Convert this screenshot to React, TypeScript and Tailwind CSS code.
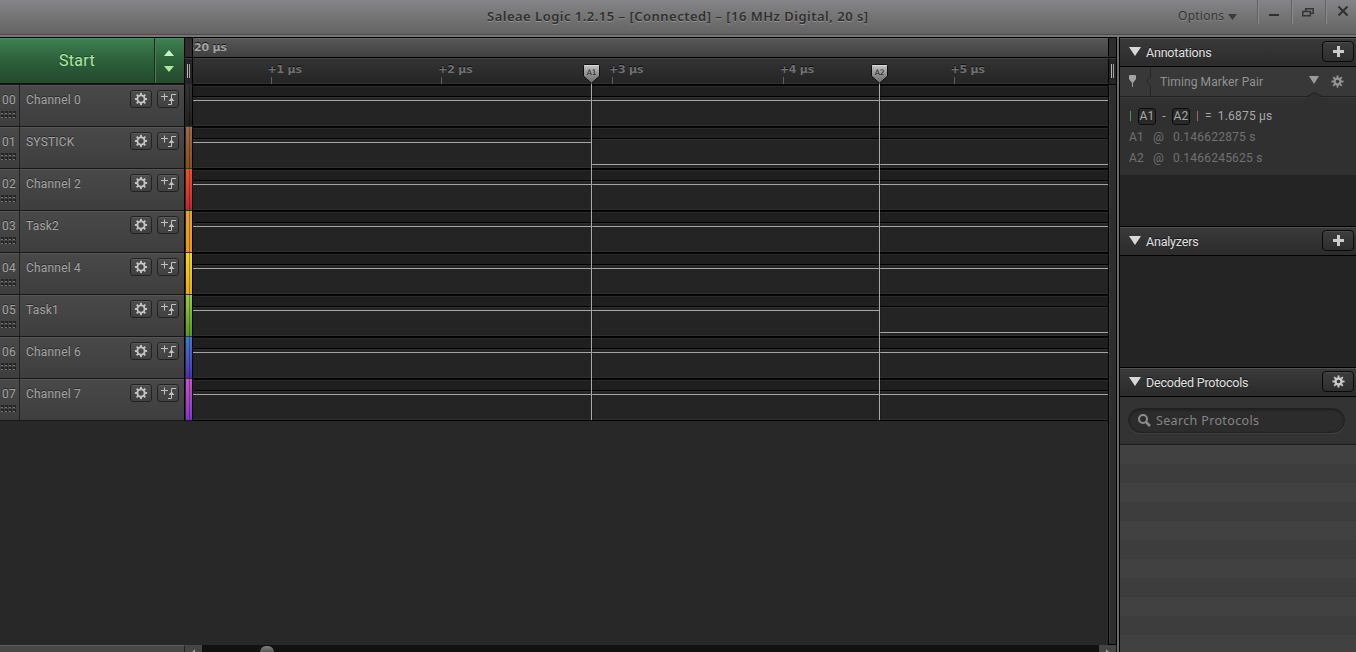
import React from "react";

const gearTeeth = [0, 45, 90, 135, 180, 225, 270, 315];

function Gear({ size, ring, color }: { size: number; ring: number; color: string }) {
  return (
    <svg width={size} height={size} viewBox="0 0 14 14" className="shrink-0">
      <circle cx="7" cy="7" r="3.6" fill="none" stroke={color} strokeWidth={ring} />
      {gearTeeth.map((a) => (
        <rect key={a} x="6.05" y="0.9" width="1.9" height="2.2" fill={color} transform={`rotate(${a} 7 7)`} />
      ))}
    </svg>
  );
}

function SolidGear({ color }: { color: string }) {
  return (
    <svg width="13" height="13" viewBox="0 0 13 13" className="block shrink-0">
      <circle cx="6.5" cy="6.5" r="3" fill="none" stroke={color} strokeWidth="2.4" />
      {gearTeeth.map((a) => (
        <rect key={a} x="5.6" y="0.4" width="1.8" height="2.6" fill={color} transform={`rotate(${a} 6.5 6.5)`} />
      ))}
    </svg>
  );
}

const channels = [
  { id: "00", name: "Channel 0", strip: "from-[#343434] to-[#202020]" },
  { id: "01", name: "SYSTICK", strip: "from-[#9b6b48] to-[#85501c]", fall: 398 },
  { id: "02", name: "Channel 2", strip: "from-[#ee5422] to-[#c71f38]" },
  { id: "03", name: "Task2", strip: "from-[#e6a238] to-[#ee9511]" },
  { id: "04", name: "Channel 4", strip: "from-[#ecd62c] to-[#e7ad08]" },
  { id: "05", name: "Task1", strip: "from-[#96cc46] to-[#58981f]", fall: 686 },
  { id: "06", name: "Channel 6", strip: "from-[#3c7bc8] to-[#4a2fb8]" },
  { id: "07", name: "Channel 7", strip: "from-[#c851bd] to-[#8632d0]" },
];

function Handle() {
  return (
    <svg width="17" height="8" viewBox="0 0 17 8" className="block">
      {[0, 4, 8, 12].map((x) =>
        [0, 4].map((y) => (
          <g key={`${x}-${y}`}>
            <rect x={x + 1} y={y} width="3" height="3" fill="#242424" />
            <rect x={x + 1} y={y + 2} width="2" height="1" fill="#777" />
          </g>
        )),
      )}
    </svg>
  );
}

const smallBtn =
  "flex h-[18px] w-[22px] items-center justify-center rounded-[3px] border border-[#222] bg-linear-to-b from-[#4d4d4d] to-[#404040] shadow-[inset_0_1px_0_#5b5b5b]";

function ChannelRow({ c }: { c: (typeof channels)[number] }) {
  return (
    <div className="flex h-[42px] border-t border-[#181818] bg-linear-to-b from-[#494949] to-[#3e3e3e] shadow-[inset_0_1px_0_#555]">
      <div className="w-5 shrink-0 border-r border-[#222] pl-0.5 pt-[7px]">
        <div className="h-[16px] text-[12px] leading-[16px] tracking-[0.2px] text-[#a5a5a5] [text-shadow:0_-1px_0_#292929]">{c.id}</div>
        <div className="-ml-0.5 mt-[3px]"><Handle /></div>
      </div>
      <div className="flex flex-1 pl-1.5 pt-[5px]">
        <div className="w-[104px] pt-[2px] text-[12px] leading-[16px] tracking-[0.2px] text-[#a5a5a5] [text-shadow:0_-1px_0_#292929]">{c.name}</div>
        <div className={smallBtn}><Gear size={14} ring={1.9} color="#c5c5c5" /></div>
        <div className={`ml-[5px] ${smallBtn}`}>
          <svg width="18" height="14" viewBox="0 0 18 14" fill="none" stroke="#c1c1c1">
            <path d="M2 4.5H9M5.5 1.5V8.5M9 12.5H12.5V2.5H17" />
            <path d="M9.5 9L12.5 5.5L15.5 9Z" fill="#c1c1c1" stroke="none" />
          </svg>
        </div>
      </div>
    </div>
  );
}

function Wave({ fall }: { fall?: number }) {
  return (
    <div className="h-[42px] border-t border-black">
      <div className="flex h-[11px] flex-col border-t border-[#080808] bg-[#1f1f1f] shadow-[inset_0_1px_0_#282828]" />
      <div className="h-[30px] border-b border-t border-b-[#303030] border-t-black bg-[#242424] shadow-[inset_0_1px_0_#2f2f2f]">
        <svg width="915" height="28" className="block" fill="none" stroke="#a6a6a6">
          <path d={fall ? `M0 3.5H${fall + 0.5}V25.5H915` : "M0 3.5H915"} />
        </svg>
      </div>
    </div>
  );
}

function Grip({ className }: { className: string }) {
  return (
    <div className={`flex flex-col ${className}`}>
      <div className="h-5 border-b border-black bg-[#2d2d2d]" />
      <div className="flex h-[26px] items-center justify-center gap-px bg-[#252525] shadow-[inset_0_1px_0_#3c3c3c]">
        <div className="h-3.5 w-px bg-[#b5b5b5]" />
        <div className="h-3.5 w-px bg-[#a0a0a0]" />
      </div>
    </div>
  );
}

function Marker({ label }: { label: string }) {
  return (
    <svg width="18" height="358" viewBox="0 0 18 358" className="block">
      <path d="M9.5 20V358" stroke="#000" strokeOpacity="0.2" />
      <path d="M8.5 20V358" stroke="#a9a9a9" />
      <defs>
        <linearGradient id={`tag${label}`} x1="0" x2="0" y1="0" y2="1">
          <stop offset="0" stopColor="#c6c6c6" />
          <stop offset="0.55" stopColor="#8d8d8d" />
          <stop offset="1" stopColor="#686868" />
        </linearGradient>
      </defs>
      <path d="M1.5 2.5Q.5 2.5 .5 3.5V14L8.5 21.3L16.5 14V3.5Q16.5 2.5 15.5 2.5Z" fill={`url(#tag${label})`} stroke="#101010" />
      <path d="M2 3.5H15" stroke="#dadada" />
      <text x="8.6" y="13" textAnchor="middle" fontSize="7.5" fontFamily="DejaVu Sans" fill="#1a1a1a">{label}</text>
    </svg>
  );
}

const tickText = "text-[11px] font-bold leading-[14px] tracking-[-0.2px] [font-family:'DejaVu_Sans',sans-serif] [text-shadow:0_-1px_0_#111]";
const ticks = ["+1 µs", "+2 µs", "+3 µs", "+4 µs", "+5 µs"];

function PanelHeader({ title, gear }: { title: string; gear?: boolean }) {
  return (
    <div className="flex h-[30px] shrink-0 items-center border-y border-black bg-linear-to-b from-[#3a3a3a] to-[#2b2b2b] pl-[9px] shadow-[inset_0_1px_0_#505050]">
      <svg width="12" height="9" viewBox="0 0 12 9" className="mb-0.5"><path d="M0 0H12L6 9Z" fill="#d8d8d8" /></svg>
      <span className="ml-[5px] flex-1 whitespace-nowrap pt-px text-[12.5px] leading-4 tracking-[-0.2px] text-[#e2e2e2] [text-shadow:0_-1px_0_#111]">{title}</span>
      <div className="mb-px mr-0.5 flex h-[21px] w-8 items-center justify-center rounded-[4px] border border-[#090909] bg-linear-to-b from-[#3d3d3d] to-[#2e2e2e] shadow-[inset_0_1px_0_#4b4b4b]">
        {gear ? <SolidGear color="#cacaca" /> : (
          <svg width="11" height="11" viewBox="0 0 11 11"><path d="M5.5 0V11M0 5.5H11" stroke="#ccc" strokeWidth="3" /></svg>
        )}
      </div>
    </div>
  );
}

function TimePair({ name, at }: { name: string; at: string }) {
  return (
    <div className="flex h-[21px] items-center pl-[9px] text-[12px] tracking-[0.22px] text-[#707070]">
      <span className="w-6">{name}</span>
      <span className="w-5">@</span>
      <span>{at}</span>
    </div>
  );
}

const bands = Array.from({ length: 11 }, (_, i) => i);

export default function App() {
  return (
    <div className="flex h-[652px] w-[1356px] flex-col overflow-hidden bg-[#282828] [font-family:Roboto,sans-serif]">
      <header className="relative flex h-[37px] shrink-0 justify-end border-b border-[#777] bg-linear-to-b from-[#858587] to-[#616161] shadow-[inset_0_-1px_0_#777,inset_0_-2px_0_#4c4c4c]">
        <h1 className="absolute left-[487px] top-[7px] whitespace-nowrap text-[13px] font-semibold leading-[18px] tracking-[0.49px] text-[#303030] [font-family:'Noto_Sans',sans-serif] [text-shadow:0_1px_0_#929292]">
          Saleae Logic 1.2.15 – [Connected] – [16 MHz Digital, 20 s]
        </h1>
        <div className="flex h-[31px] w-[80px] items-center pl-px text-[12px] tracking-[0.3px] text-[#303030] [font-family:'Open_Sans',sans-serif] [text-shadow:0_1px_0_#888]">
          Options
          <svg width="9" height="6" viewBox="0 0 9 6" className="ml-1 mt-0.5"><path d="M0 0H9L4.5 6Z" fill="#3b3b3b" /></svg>
        </div>
        <div className="flex h-6 w-[34px] border-l border-[#626262] pl-[11px] pt-3.5 shadow-[inset_1px_0_0_#8a8a8a]"><div className="h-0.5 w-2.5 bg-[#303030]" /></div>
        <div className="flex h-6 w-[34px] border-l border-[#626262] pl-[10px] pt-2 shadow-[inset_1px_0_0_#8a8a8a]">
          <svg width="12" height="9" viewBox="0 0 12 9" fill="none" stroke="#353535" strokeWidth="1.5"><path d="M3.7 3V.8H11.2V5.2H9M.8 3.5H8.3V7.8H.8Z" /></svg>
        </div>
        <div className="flex h-6 w-[31px] border-l border-[#626262] pl-[12px] pt-1.5 shadow-[inset_1px_0_0_#8a8a8a]">
          <svg width="10" height="10" viewBox="0 0 10 10" stroke="#303030" strokeWidth="2"><path d="M.5 .5L9.5 9.5M9.5 .5L.5 9.5" /></svg>
        </div>
      </header>

      <main className="flex min-h-0 flex-1">
        <section className="flex w-[185px] shrink-0 flex-col border-t border-black">
          <div className="flex h-[46px] shrink-0 border-b border-[#111] bg-linear-to-b from-[#3f8253] via-[#2c6039] to-[#24492f] shadow-[inset_0_1px_0_#4a905e]">
            <button className="w-[154px] text-[16px] tracking-[0.3px] text-[#afe7a4] [text-shadow:0_-1px_0_#1c432a]">Start</button>
            <div className="flex flex-1 flex-col items-center gap-[10px] border-x border-l-[#172e1d] border-r-black pr-px pt-3 shadow-[inset_1px_0_0_#4c7c58]">
              <svg width="10" height="6" viewBox="0 0 10 6"><path d="M0 6H10L5 0Z" fill="#c9f3bd" /></svg>
              <svg width="10" height="6" viewBox="0 0 10 6"><path d="M0 0H10L5 6Z" fill="#aee89d" /></svg>
            </div>
          </div>
          <div className="border-r border-black">
            {channels.map((c) => <ChannelRow key={c.id} c={c} />)}
            <div className="h-px bg-[#181818]" />
          </div>
          <div className="flex-1" />
          <div className="h-[7px] border-r border-t border-r-[#222] border-t-[#5d5d5d] bg-[#484848]" />
        </section>

        <section className="relative flex w-[932px] shrink-0 flex-col">
          <div className="flex h-[384px] shrink-0">
            <div className="flex w-2 shrink-0 flex-col border-r border-t border-black">
              <Grip className="h-[46px] shrink-0" />
              {channels.map((c) => (
                <div key={c.id} className={`ml-px flex h-[42px] justify-center border-t border-[#303030] bg-linear-to-b ${c.strip}`}>
                  <div className="h-full w-px bg-black/30" />
                </div>
              ))}
              <div className="h-px bg-[#181818]" />
            </div>
            <div className="flex w-[915px] shrink-0 flex-col border-t border-black">
              <div className="h-[19px] bg-linear-to-b from-[#585858] to-[#404040] pt-[3px] shadow-[inset_0_1px_0_#666]">
                <div className={`${tickText} overflow-hidden text-[#a4a4a4]`}><span className="-ml-[6.5px]">520 µs</span></div>
              </div>
              <div className="flex h-[27px] border-b border-t border-b-[#303030] border-t-black bg-linear-to-b from-[#343434] to-[#252525] pl-[74.5px] pt-[5px] shadow-[inset_0_1px_0_#404040]">
                {ticks.map((t) => (
                  <div key={t} className="w-[170.75px] shrink-0">
                    <div className={`${tickText} text-[#707070]`}>{t}</div>
                    <div className="ml-[3px] h-[7px] w-px bg-[#606060]" />
                  </div>
                ))}
              </div>
              {channels.map((c) => <Wave key={c.id} fall={c.fall} />)}
              <div className="h-px bg-black" />
            </div>
            <div className="w-[9px] shrink-0" />
          </div>
          <div className="flex-1 bg-[#282828]" />
          <div className="flex h-[7px] shrink-0 bg-[#111]">
            <div className="flex w-[17px] justify-center bg-[#454545]">
              <svg width="9" height="7" viewBox="0 0 9 7"><path d="M2.5 7.5L6 4V7Z" fill="#999" /></svg>
            </div>
            <div className="ml-[58px] mt-px h-1.5 w-3.5 rounded-t-full bg-linear-to-b from-[#828282] to-[#555]" />
            <div className="ml-auto mr-px flex w-[17px] justify-center bg-[#454545]">
              <svg width="9" height="7" viewBox="0 0 9 7"><path d="M3 4L6.5 7.5H3Z" fill="#999" /></svg>
            </div>
          </div>
          <div className="absolute right-0 top-0 flex h-[608px] w-[9px] flex-col border border-black bg-[#2d2d2d] shadow-[inset_1px_0_0_#383838]">
            <Grip className="" />
            <div className="h-px bg-black" />
          </div>
          <div className="absolute left-[398px] top-[25px]"><Marker label="A1" /></div>
          <div className="absolute left-[686px] top-[25px]"><Marker label="A2" /></div>
        </section>

        <aside className="flex min-w-0 flex-1 flex-col border-l-2 border-[#6b6b6b]">
          <div className="flex flex-1 flex-col border-l border-black bg-[#242424]">
            <PanelHeader title="Annotations" />
            <div className="flex h-[29px] shrink-0 items-center bg-[#383838]">
              <div className="flex h-full w-[31px] shrink-0 items-center pl-[8px]">
                <svg width="23" height="29" viewBox="0 0 23 29" className="shrink-0">
                  <path d="M2 8H7Q8 8 8 9V12L5 16H4L1 12V9Q1 8 2 8Z" fill="#a4a4a4" />
                  <path d="M4.5 14V20" stroke="#999" />
                  <path d="M22.5 0V10L18.5 14.5L22.5 19V29" stroke="#262626" fill="none" />
                </svg>
              </div>
              <span className="ml-[9px] flex-1 whitespace-nowrap text-[12px] tracking-[0.1px] text-[#929292]">Timing Marker Pair</span>
              <svg width="10" height="8" viewBox="0 0 10 8" className="mb-[3px]"><path d="M0 0H10L5 8Z" fill="#9b9b9b" /></svg>
              <span className="ml-[12px] mr-[12px] w-[13px] pb-px"><SolidGear color="#929292" /></span>
            </div>
            <div className="relative h-[79px] shrink-0 border-t border-[#202020] bg-[#303030] pt-[9px] shadow-[inset_0_1px_0_#393939]">
              <svg width="16" height="6" viewBox="0 0 16 6" className="absolute -top-[5px] left-[187px]"><path d="M0 5L7.5 1L15 5V6H0Z" fill="#303030" /><path d="M0 4.5L7.5 .5L15 4.5" fill="none" stroke="#202020" /></svg>
              <div className="flex h-[20px] items-center pl-[10px] text-[12px] tracking-[0.2px] text-[#a8a8a8]">
                <div className="h-2.5 w-px bg-[#608b60]" />
                <span className="ml-[7px] flex h-[17px] w-[18px] items-center justify-center rounded-[3px] border border-[#0c0c0c] bg-[#292929]">A1</span>
                <span className="w-4 text-center">-</span>
                <span className="flex h-[17px] w-[18px] items-center justify-center rounded-[3px] border border-[#0c0c0c] bg-[#292929]">A2</span>
                <div className="ml-[7px] h-2.5 w-px bg-[#a16075]" />
                <span className="ml-[7px]">=</span>
                <span className="ml-[6px] whitespace-nowrap">1.6875 µs</span>
              </div>
              <TimePair name="A1" at="0.146622875 s" />
              <TimePair name="A2" at="0.1466245625 s" />
            </div>
            <div className="h-[51px] shrink-0" />
            <PanelHeader title="Analyzers" />
            <div className="h-[111px] shrink-0" />
            <PanelHeader title="Decoded Protocols" gear />
            <div className="h-[47px] shrink-0 bg-[#333] pl-2 pt-[11px]">
              <div className="flex h-[25px] w-[217px] items-center rounded-full border border-[#202020] bg-[#2c2c2c] pl-[9px] shadow-[inset_0_1px_2px_#1d1d1d,0_1px_0_#414141]">
                <svg width="13" height="13" viewBox="0 0 13 13" fill="none" stroke="#8d8d8d"><circle cx="5" cy="5" r="4" strokeWidth="2" /><path d="M8 8L12 12" strokeWidth="2.5" /></svg>
                <span className="ml-[5px] pt-[2px] text-[12.5px] tracking-[0.35px] text-[#858585] [font-family:'Noto_Sans',sans-serif]">Search Protocols</span>
              </div>
            </div>
            <div className="min-h-0 flex-1 overflow-hidden border-t border-[#1a1a1a]">
              {bands.map((i) => <div key={i} className={i % 2 ? "h-[19px] bg-[#3d3d3d]" : "h-[19px] bg-[#414141]"} />)}
            </div>
          </div>
        </aside>
      </main>
    </div>
  );
}
